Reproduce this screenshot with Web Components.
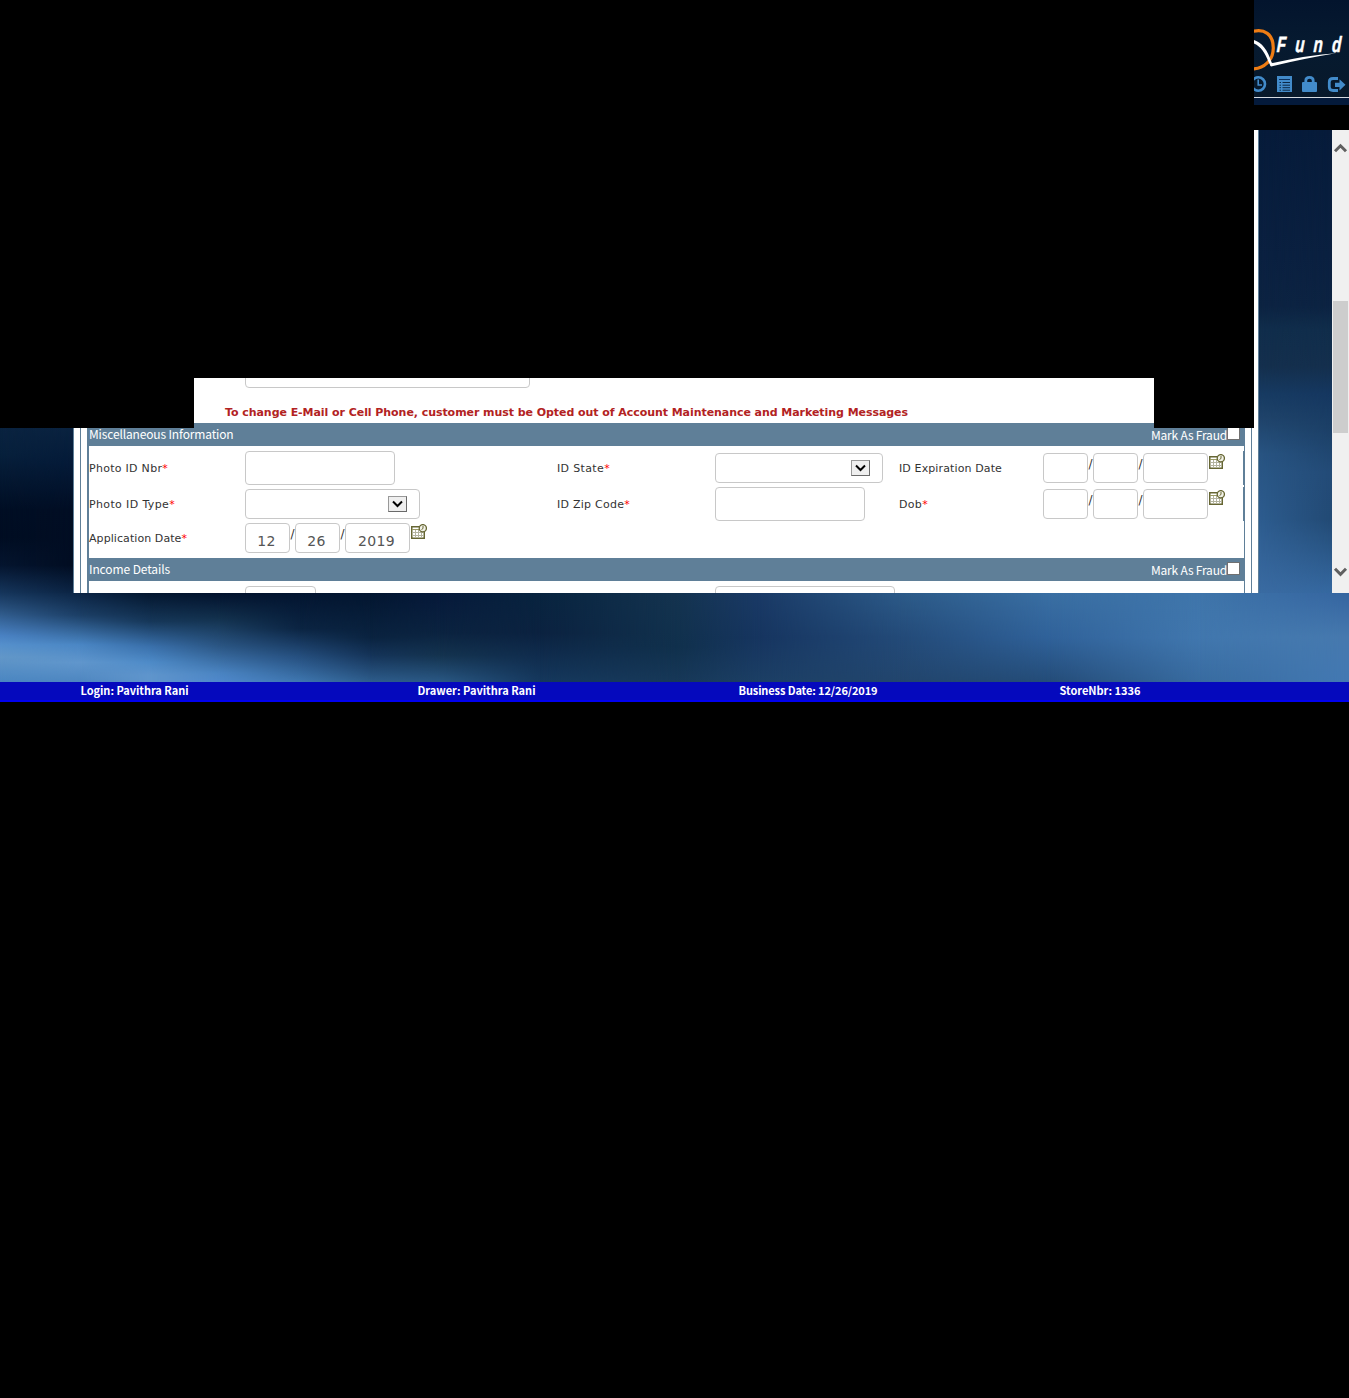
<!DOCTYPE html>
<html lang="en">
<head>
<meta charset="utf-8">
<title>QFund</title>
<style>
html,body{margin:0;background:#000}
body{width:1349px;height:1398px;overflow:hidden;font-family:"DejaVu Sans",sans-serif}
</style>
</head>
<body>
<qf-page></qf-page>
<script>
const define = (name, html, setup) => customElements.define(name, class extends HTMLElement {
  connectedCallback() {
    if (this.shadowRoot) return;
    const t = document.createElement('template');
    t.innerHTML = html;
    this.attachShadow({mode: 'open'}).appendChild(t.content.cloneNode(true));
    if (setup) setup(this, this.shadowRoot);
  }
});

/* One line of text, tracked so that it takes exactly the given width. */
define('fit-text', `<style>:host{display:inline-block;white-space:nowrap}span{display:inline-block}</style><span><slot></slot></span>`, (el, root) => {
  const s = root.querySelector('span'), w = +el.getAttribute('w');
  const n = el.textContent.length;
  el.style.letterSpacing = ((w - s.getBoundingClientRect().width) / n).toFixed(3) + 'px';
});

/* Blue backdrop: vertical gradients blended from column to column. */
define('blue-strip', `<style>:host{display:flex}.seg{display:grid;flex:none}.seg i{grid-area:1/1}.seg i+i{-webkit-mask:linear-gradient(90deg,transparent,#000);mask:linear-gradient(90deg,transparent,#000)}</style>`, (el, root) => {
  const cols = el.getAttribute('cols').split(';').map(c => {
    const [x, g] = c.split(':');
    return [+x, `linear-gradient(${g})`];
  });
  for (let i = 0; i < cols.length - 1; i++) {
    const d = document.createElement('div');
    d.className = 'seg';
    d.style.width = cols[i + 1][0] - cols[i][0] + 'px';
    for (const c of [cols[i], cols[i + 1]]) {
      const b = document.createElement('i');
      b.style.background = c[1];
      d.appendChild(b);
    }
    root.appendChild(d);
  }
});

define('qf-header', `<style>
:host{display:block;width:95px;height:105px;margin-left:1254px;background:linear-gradient(#03142d,#061a30 40%,#08192b 92%,#041a3b 93%)}
svg{display:block}</style>
<svg width="95" height="105" viewBox="1254 0 95 105">
<path d="M1253 31.4C1264 28.5 1273.3 34 1273.3 48C1273.3 60.5 1264 68.4 1253 69" fill="none" stroke="#ef7d14" stroke-width="3.2"/>
<path d="M1254 40C1262 42.5 1268 50 1272.5 65.4L1270.6 66.2L1268.6 62C1265 53 1261 46.5 1254 43.5Z" fill="#fff"/>
<path d="M1269.8 62.3L1272.8 63Q1309 55 1336 53.3Q1308 57.8 1271 66.4Z" fill="#fff"/>
<text font-family="Liberation Sans,sans-serif" font-weight="700" font-style="italic" font-size="22" fill="#fff" stroke="#fff" stroke-width=".5" transform="translate(1276.6 52) skewX(-3) scale(.69 1)"><tspan letter-spacing="13.2">Fun</tspan><tspan>d</tspan></text>
<g fill="none" stroke="#428bca" stroke-width="2.6"><circle cx="1258.3" cy="84" r="6.7"/><path d="M1258.2 79.6V85H1262" stroke-width="1.6"/></g>
<g><rect x="1277" y="76" width="15" height="16" fill="#428bca"/><path d="M1279 79.5h11" stroke="#0b315e" stroke-width="1"/><path d="M1279.5 82.5h1.5m1.5 0h7.5M1279.5 85.2h1.5m1.5 0h7.5M1279.5 87.7h1.5m1.5 0h7.5M1279.5 90.2h1.5m1.5 0h7.5" stroke="#071d35" stroke-width=".9"/></g>
<rect x="1302" y="82" width="15" height="10" rx="1" fill="#428bca"/><path d="M1305.8 83V80.5Q1305.8 77.3 1309.5 77.3T1313.2 80.5V83" stroke="#428bca" stroke-width="2.8" fill="none"/>
<path d="M1338 78.5H1333Q1329.3 78.5 1329.3 82V87Q1329.3 90.5 1333 90.5H1338" fill="none" stroke="#428bca" stroke-width="2.8"/><path d="M1335 82.7h4.5v-3.5l6 5.6l-6 5.6v-3.5H1335z" fill="#428bca"/>
<path d="M1254 97.5h95" stroke="#d5dae0"/>
</svg>`);

define('scroll-bar', `<style>
:host{display:flex;flex-direction:column;align-items:center;width:17px;height:463px;background:#f0f0f0}
svg{flex:none}.thumb{width:15px;height:132px;background:#cdcdcd;margin:148px 0 129px}</style>
<svg width="17" height="23"><path d="M3 21.3L8.5 15.8L14 21.3" fill="none" stroke="#606060" stroke-width="3"/></svg>
<div class="thumb"></div>
<svg width="17" height="20"><path d="M3 6.8L8.5 12.3L14 6.8" fill="none" stroke="#606060" stroke-width="3"/></svg>`);

define('text-box', `<style>
:host{display:flex;justify-content:center;box-sizing:border-box;flex:none;height:34px;width:150px;border:1px solid #c8c8c8;border-radius:4px;background:#fff;color:#555;font-size:14px;line-height:34px;padding-right:2px}
</style><slot></slot>`);

define('select-box', `<style>
:host{display:flex;align-items:center;justify-content:flex-end;box-sizing:border-box;flex:none;height:30px;border:1px solid #c8c8c8;border-radius:4px;padding-right:12px;background:#fff}
div{box-sizing:border-box;width:19px;height:16px;border:1px solid #6a6a6a;border-top-color:#999;border-left-color:#999;background:#efefef}svg{display:block}</style>
<div><svg width="17" height="14"><path d="M4 4.5L8.5 9L13 4.5" fill="none" stroke="#000" stroke-width="2"/></svg></div>`);

define('date-field', `<style>
:host{display:flex;align-items:flex-start;height:30px}
text-box{width:45px;height:30px}text-box.y{width:65px}
i{width:5px;font:normal 12px/22px "DejaVu Sans",sans-serif;color:#333;text-align:center;display:flex;justify-content:center}
svg{margin:1px 0 0 1px}</style>
<text-box><slot name="m"></slot></text-box><i>/</i><text-box><slot name="d"></slot></text-box><i>/</i><text-box class="y"><slot name="y"></slot></text-box>
<svg width="16" height="16"><rect x=".75" y="2.75" width="12.5" height="11.5" fill="#fff" stroke="#666633" stroke-width="1.5"/><path d="M1 5.5h12" stroke="#9a9a66" stroke-width="1"/><path d="M4.5 6v8M7.5 6v8M10.5 6v8M1 8.5h12M1 11.5h12" stroke="#b4b4a0" stroke-width="1"/><circle cx="11.8" cy="4.2" r="3.6" fill="#f2f2e8" stroke="#666633" stroke-width="1.3"/><path d="M12 2v2.5l-1.5 1" fill="none" stroke="#666633"/></svg>`);

define('section-bar', `<style>
:host{display:flex;justify-content:space-between;height:23px;background:#5f7f98;color:#fff;font:400 12px/22px "Noto Sans CJK SC",sans-serif}
.r{display:flex;padding-right:4px}.r fit-text{line-height:24px}
b{box-sizing:border-box;width:13px;height:13px;margin-top:4px;background:#fff;border:1px solid #707070}</style>
<slot></slot><div class="r"><fit-text w="76">Mark As Fraud</fit-text><b></b></div>`);

define('form-label', `<style>:host{display:block;font-size:11px;color:#333;line-height:14px;padding-top:2px}</style><slot></slot>`);

define('qf-form', `<style>
:host{display:block;height:463px;width:1186px;box-sizing:border-box;overflow:hidden;background:#fff;border:solid #5f7f98;border-width:0 1px;padding:0 6px}
.in{height:463px;border:solid #5f7f98;border-width:0 1px;padding:0 6px}
.form{height:463px;border:solid #5f7f98;border-width:0 1px 0 2px;display:flex;flex-direction:column}
.top{height:293px;flex:none;display:flex;flex-direction:column;justify-content:flex-end}
.top text-box{width:285px;margin-left:156px}
.note{height:35px;padding-left:136px;font-weight:700;font-size:11px;line-height:50px;color:#b22222}
section-bar{flex:none}
.rows{height:112px;box-sizing:border-box;padding-top:4px;flex:none}
.row{display:grid;grid-template-columns:156px 312px 158px 184px 144px 1fr;align-items:center;height:36px}
.row.edge{background:linear-gradient(#5f7f98,#5f7f98) right 1px/1px 34px no-repeat;background-position:right 1px}
.row.last{height:32px}
em{font-style:normal;color:#f00}
.next{display:flex;padding:5px 0 0 156px;gap:399px}
</style>
<div class="in"><div class="form">
<div class="top"><text-box></text-box><div class="note"><fit-text w="683">To change E-Mail or Cell Phone, customer must be Opted out of Account Maintenance and Marketing Messages</fit-text></div></div>
<section-bar><fit-text w="144.5">Miscellaneous Information</fit-text></section-bar>
<div class="rows">
<div class="row edge"><form-label><fit-text w="79">Photo ID Nbr<em>*</em></fit-text></form-label><text-box></text-box><form-label><fit-text w="53">ID State<em>*</em></fit-text></form-label><select-box style="width:168px"></select-box><form-label><fit-text w="103">ID Expiration Date</fit-text></form-label><date-field></date-field></div>
<div class="row edge"><form-label><fit-text w="86">Photo ID Type<em>*</em></fit-text></form-label><select-box style="width:175px"></select-box><form-label><fit-text w="73">ID Zip Code<em>*</em></fit-text></form-label><text-box></text-box><form-label><fit-text w="29">Dob<em>*</em></fit-text></form-label><date-field></date-field></div>
<div class="row last"><form-label><fit-text w="98">Application Date<em>*</em></fit-text></form-label><date-field><fit-text w="18.5" slot="m">12</fit-text><fit-text w="18.5" slot="d">26</fit-text><fit-text w="37" slot="y">2019</fit-text></date-field></div>
</div>
<section-bar><fit-text w="81">Income Details</fit-text></section-bar>
<div class="next"><text-box style="width:71px"></text-box><text-box style="width:180px"></text-box></div>
</div></div>`);

define('status-bar', `<style>
:host{display:flex;box-sizing:border-box;height:20px;padding-left:80.5px;background:linear-gradient(#0509bd 18px,#0000f0 18px);color:#fff;font:700 11px/17px "Noto Sans CJK SC",sans-serif}
div{flex:none;width:321px}.a{width:337px}</style>
<div class="a"><fit-text w="108">Login: Pavithra Rani</fit-text></div><div><fit-text w="118">Drawer: Pavithra Rani</fit-text></div><div><fit-text w="139">Business Date: 12/26/2019</fit-text></div><div><fit-text w="81">StoreNbr: 1336</fit-text></div>`);

define('qf-page', `<style>
:host{display:block;height:1398px;background:#000}
.stage{position:relative;margin-top:25px}
.main{display:flex;height:463px}
.l{width:73px}.r{width:73px}
.low{height:89px}
.mask{position:absolute;background:#000;left:0;top:0}
</style>
<qf-header></qf-header>
<div class="stage">
<div class="main">
<blue-strip class="l" cols="0:#0a2340 0,#0a2340 64%,#07203c 70%,#010e24 82%,#010d22 88%,#05152f 94%,#16365c 100%;73:#0a2340 0,#0a2340 64%,#041a38 72%,#010e24 82%,#010d22 94%,#0c2545 100%"></blue-strip>
<qf-form></qf-form>
<blue-strip class="r" cols="0:#061b3a 0,#0a2040 27%,#0c2342 38%,#102d4b 43%,#142f4d 51%,#173b62 57%,#1f436a 62%,#285482 70%,#2d5c8f 84%,#3a6ba2 100%;73:#061b3a 0,#0a2040 27%,#0c2342 38%,#102d4b 43%,#142f4d 51%,#153760 57%,#1b3f66 64%,#234b77 74%,#224a74 84%,#3568a0 100%"></blue-strip>
<scroll-bar></scroll-bar>
</div>
<blue-strip class="low" cols="0:#16365c,#2c5583 20%,#4a82c4 48%,#5590cc 58%,#6297c8 72%,#4a86c2;80:#0c2545,#1c3f66 25%,#4a86c4 58%,#6096cc 78%,#4e86c0;150:#04172f,#163759 32%,#3a70ab 60%,#4e8bc8 78%,#5f95cc 92%;220:#02122d,#12304c 28%,#2b5684 60%,#4a84c2 90%,#4f88cc;300:#031530,#0b2442 40%,#265080 72%,#3f77b0;370:#031630,#0a2340 50%,#153459 70%,#2e5d8c;440:#06193a,#0b2340 45%,#14334f 70%,#2a5884;540:#08243f,#0b2240 45%,#15385d;675:#14334f,#10304c 60%,#173858;760:#1a3a66,#163560 50%,#1c3f65;900:#2c5a88,#234a78 50%,#22456d;1050:#3a6fa3,#30629a 50%,#244c78;1200:#3f75aa,#4177ae 50%,#386ba0;1349:#3565a0,#4679ae 50%,#4379b3"></blue-strip>
<div class="mask" style="width:1254px;height:248px"></div>
<div class="mask" style="width:194px;height:298px"></div>
<div class="mask" style="left:1154px;width:100px;height:298px"></div>
</div>
<status-bar></status-bar>`);
</script>
</body>
</html>
